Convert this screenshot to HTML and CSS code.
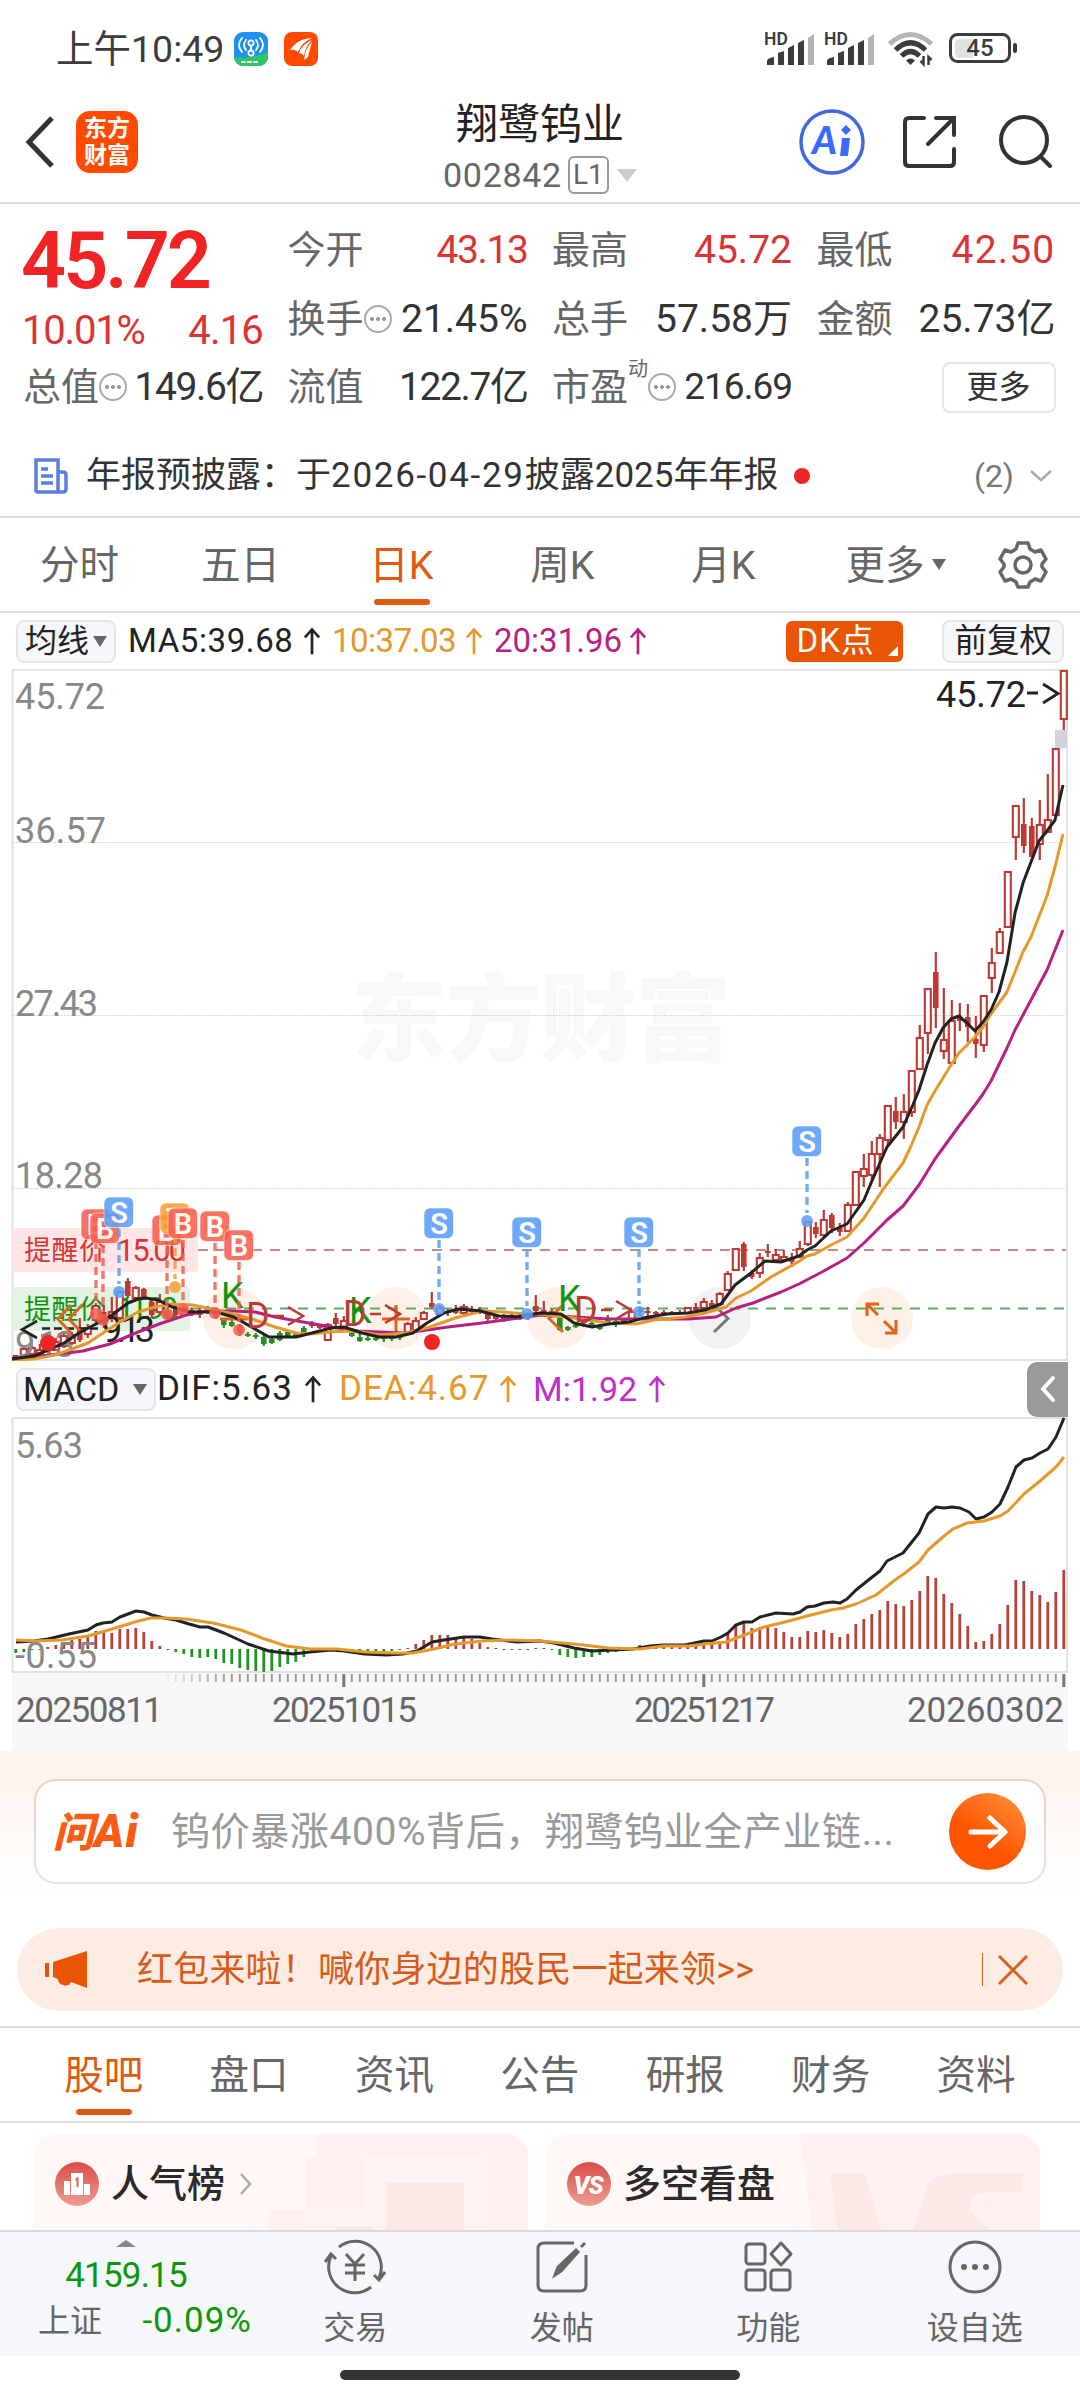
FILE: index.html
```html
<!DOCTYPE html>
<html lang="zh-CN">
<head>
    <meta charset="utf-8">
    <title>翔鹭钨业 002842</title>
    <link rel="stylesheet" href="styles.css">
</head>
<body>
    <div class="status-bar">
        <span class="clock">上午10:49</span>
        <svg class="app-icon" width="34" height="34" viewBox="0 0 34 34">
            <rect width="34" height="34" rx="9" fill="#1e90f0"/>
            <path d="M0 25 Q17 27 34 20 V25 a9 9 0 0 1-9 9 H9 a9 9 0 0 1-9-9z" fill="#2fc46a"/>
            <g fill="none" stroke="#fff" stroke-width="1.8" stroke-linecap="round">
                <path d="M8 6 Q2 13 8 20M12 8 Q8 13 12 18M26 6 Q32 13 26 20M22 8 Q26 13 22 18M17 14 V19"/>
                <circle cx="17" cy="11" r="2.6"/><circle cx="17" cy="21" r="2.6"/>
                <path d="M8 30 H26" stroke-dasharray="3 3"/>
            </g>
        </svg>
        <svg class="app-icon" width="34" height="34" viewBox="0 0 34 34">
            <rect width="34" height="34" rx="8" fill="#ff4a00"/>
            <path d="M6 18 Q14 6 28 6 Q18 10 14 20 Q11 17 6 18zM15 21 Q18 12 28 8 Q21 15 20 24 Q18 21 15 21zM20 28 Q21 16 28 10 Q25 20 24 25z" fill="#fff"/>
        </svg>
        <div class="status-right">
            <svg width="110" height="36" viewBox="765 31 110 36">
                <g id="sig">
                    <text x="764" y="45" class="hd">HD</text>
                    <path d="M767 65 v-4 q0-3 7-4 v8zM778 65 v-12 l6-2 v14zM788 65 v-17 l6-3 v20zM798 65 v-22 l6-3 v25z" fill="#3c3c3c"/>
                    <path d="M808 65 v-27 l6-4 v31z" fill="#b4b4b4"/>
                </g>
                <use href="#sig" x="60"/>
            </svg>
            <svg class="wifi" width="46" height="36" viewBox="0 0 46 36" fill="none" stroke-width="5">
                <path d="M1.500 13 Q22.500 -6 43.500 13" stroke="#b4b4b4"/>
                <path d="M7.500 19 Q22.500 4.500 37.500 19" stroke="#3c3c3c"/>
                <path d="M13.500 25 Q22.500 16 31.500 25" stroke="#3c3c3c"/>
                <path d="M22.500 34 l-4.500-4.500 q4.500-4 9 0z" fill="#3c3c3c"/>
                <path d="M35.500 25 v8 l-3-3M40.500 34 v-8 l3 3" stroke="#3c3c3c" stroke-width="2.500"/>
            </svg>
            <svg width="70" height="32" viewBox="0 0 70 32">
                <rect x="1.500" y="1.500" width="59" height="27" rx="7" fill="none" stroke="#3c3c3c" stroke-width="3"/>
                <path d="M11 6 H24 V25 H11 Q6 25 6 20 V11 Q6 6 11 6z" fill="#e2e2e2"/>
                <rect x="64" y="10" width="4" height="10" rx="2" fill="#3c3c3c"/>
                <text x="31" y="23" class="battery" text-anchor="middle">45</text>
            </svg>
        </div>
    </div>

    <div class="header">
        <div class="header-left">
            <svg width="30" height="52" viewBox="0 0 30 52" fill="none" stroke="#333" stroke-width="5"><path d="M27 2 L4 26 L27 50"/></svg>
            <div class="brand">东方<br>财富</div>
        </div>
        <div class="header-title">
            <div class="name">翔鹭钨业</div>
            <div class="code"><span class="code-no">002842</span><span class="level">L1</span><i class="tri big"></i></div>
        </div>
        <div class="header-right">
            <svg width="66" height="66" viewBox="0 0 66 66">
                <circle cx="33" cy="33" r="31" fill="none" stroke="#4069e0" stroke-width="3.500"/>
                <text x="13" y="45" class="ai">A</text>
                <path d="M43 29 h8 l-2 18 h-8z" fill="#3a6bff"/>
                <path d="M47 16 l5 5-5 5-5-5z" fill="#3a6bff"/>
            </svg>
            <svg width="54" height="54" viewBox="0 0 54 54" fill="none" stroke="#333" stroke-width="4" stroke-linecap="round">
                <path d="M21 3 H6 Q2 3 2 7 V47 Q2 51 6 51 H47 Q51 51 51 47 V34M33 3 H51 V20M51 3 L25 29"/>
            </svg>
            <svg width="54" height="54" viewBox="0 0 54 54" fill="none" stroke="#333" stroke-width="4" stroke-linecap="round">
                <circle cx="25" cy="25" r="23"/><path d="M42 42 L51 51"/>
            </svg>
        </div>
    </div>

    <div class="quote">
        <div class="quote-main">
            <div class="price">45.72</div>
            <div class="change"><span>10.01%</span><span>4.16</span></div>
            <div class="item"><label>总值<i class="more-dot"></i></label><b class="tight">149.6亿</b></div>
        </div>
        <div class="quote-col">
            <div class="item"><label>今开</label><b class="red tight">43.13</b></div>
            <div class="item"><label>换手<i class="more-dot"></i></label><b>21.45%</b></div>
            <div class="item"><label>流值</label><b class="tight">122.7亿</b></div>
        </div>
        <div class="quote-col">
            <div class="item"><label>最高</label><b class="red">45.72</b></div>
            <div class="item"><label>总手</label><b>57.58万</b></div>
            <div class="item"><label>市盈<sup>动</sup><i class="more-dot"></i></label><b class="pe">216.69</b></div>
        </div>
        <div class="quote-col">
            <div class="item"><label>最低</label><b class="red loose">42.50</b></div>
            <div class="item"><label>金额</label><b>25.73亿</b></div>
            <div class="item end"><span class="more-btn">更多</span></div>
        </div>
    </div>

    <div class="notice">
        <svg width="34" height="36" viewBox="0 0 34 36" fill="none" stroke="#5b7fe0" stroke-width="3.500">
            <path d="M2 2 H24 V34 H4 Q2 34 2 32zM24 14 H29 Q32 14 32 17 V31 Q32 34 29 34 H24M7 11 H14M7 18 H19M7 25 H19"/>
        </svg>
        <span class="notice-text">年报预披露：于<span class="date">2026-04-29</span>披露2025年年报</span>
        <i class="red-dot"></i>
        <span class="count">(2)</span>
        <svg width="22" height="12" viewBox="0 0 22 12" fill="none" stroke="#aaa" stroke-width="2.500"><path d="M1 1 L11 10 L21 1"/></svg>
    </div>

    <div class="tabs period">
        <span>分时</span><span>五日</span><span class="active">日K</span><span>周K</span><span>月K</span>
        <span class="wide">更多<i class="tri"></i></span>
        <svg width="50" height="50" viewBox="-25 -25 50 50" fill="none" stroke="#666" stroke-width="3.500" stroke-linejoin="round">
            <path d="M-5-22 H5 L7-16 L12-13 L18-15 L23-6 L19-1 V2 L23 7 L18 16 L12 14 L7 17 L5 22 H-5 L-7 17 L-12 14 L-18 16 L-23 7 L-19 2 V-1 L-23-6 L-18-15 L-12-13 L-7-16z"/>
            <circle r="8"/>
        </svg>
    </div>

    <div class="indicator-row ma-row">
        <span class="chip">均线<i class="tri"></i></span>
        <span class="ind ma5">MA5:39.68<svg class="up" viewBox="0 0 18 30"><path d="M9 30 V2M1 11 L9 2 L17 11"/></svg></span>
        <span class="ind ma10">10:37.03<svg class="up" viewBox="0 0 18 30"><path d="M9 30 V2M1 11 L9 2 L17 11"/></svg></span>
        <span class="ind ma20">20:31.96<svg class="up" viewBox="0 0 18 30"><path d="M9 30 V2M1 11 L9 2 L17 11"/></svg></span>
        <span class="dk">DK点</span>
        <span class="chip right">前复权</span>
    </div>

    <svg class="chart" id="kline" width="1080" height="692" viewBox="0 669 1080 692"></svg>

    <div class="indicator-row macd-row">
        <span class="chip">MACD<i class="tri"></i></span>
        <span class="ind dif">DIF:5.63<svg class="up" viewBox="0 0 18 30"><path d="M9 30 V2M1 11 L9 2 L17 11"/></svg></span>
        <span class="ind dea">DEA:4.67<svg class="up" viewBox="0 0 18 30"><path d="M9 30 V2M1 11 L9 2 L17 11"/></svg></span>
        <span class="ind m">M:1.92<svg class="up" viewBox="0 0 18 30"><path d="M9 30 V2M1 11 L9 2 L17 11"/></svg></span>
        <span class="fold"><svg width="16" height="28" viewBox="0 0 16 28" fill="none" stroke="#fff" stroke-width="4" stroke-linecap="round"><path d="M13 3 L3 14 L13 25"/></svg></span>
    </div>

    <svg class="chart" id="macd" width="1080" height="334" viewBox="0 1417 1080 334"></svg>

    <div class="ask">
        <div class="ask-box">
            <span class="ask-logo">问<span>Ai</span></span>
            <span class="ask-text">钨价暴涨400%背后，翔鹭钨业全产业链...</span>
            <span class="ask-go"><svg width="40" height="36" viewBox="0 0 40 36" fill="none" stroke="#fff" stroke-width="5" stroke-linecap="round" stroke-linejoin="round"><path d="M3 18 H36M22 4 L37 18 L22 32"/></svg></span>
        </div>
    </div>

    <div class="banner">
        <svg width="44" height="38" viewBox="0 0 44 38" fill="#ea5504"><path d="M1 12 h4 v14 h-4zM9 11 L43 0 V37 L27 31 Q25 36 19 34 Q14 33 14 28 L9 26z"/></svg>
        <span class="banner-text">红包来啦！喊你身边的股民一起来领&gt;&gt;</span>
        <i class="bar"></i>
        <svg width="30" height="30" viewBox="0 0 30 30" stroke="#d9601f" stroke-width="3"><path d="M1 1 L29 29M29 1 L1 29"/></svg>
    </div>

    <div class="tabs section">
        <span class="active">股吧</span><span>盘口</span><span>资讯</span><span>公告</span><span>研报</span><span>财务</span><span>资料</span>
    </div>

    <div class="cards">
        <div class="card">
            <svg class="deco" width="260" height="98" viewBox="0 0 260 98">
                <path d="M48 0 H260 V98 H0 V76 H38 V22 H48z" fill="#fef1ef"/>
                <path d="M35 76 H96 V22 H218 V98 H35z" fill="#fff4f2"/>
                <path d="M118 49 H196 V98 H118zM68 93 H104 V98 H68z" fill="#fce8e6"/>
            </svg>
            <svg width="44" height="44" viewBox="0 0 44 44">
                <circle cx="22" cy="22" r="22" fill="url(#redgrad)"/>
                <path d="M9 19 h6 v14 h-6zM16 11 h12 v22 h-12zM29 22 h6 v11 h-6z" fill="#fff"/>
                <path d="M20.500 18 L22.500 16.500 V25" fill="none" stroke="#dd6058" stroke-width="2"/>
                <defs><linearGradient id="redgrad" x2="0" y2="1"><stop stop-color="#d94c48"/><stop offset="1" stop-color="#ee9c94"/></linearGradient></defs>
            </svg>
            <span>人气榜</span>
            <svg width="12" height="24" viewBox="0 0 12 24" fill="none" stroke="#aaa" stroke-width="2.500"><path d="M1 2 L10 12 L1 22"/></svg>
        </div>
        <div class="card">
            <svg class="deco" width="240" height="98" viewBox="0 0 240 98">
                <path d="M0 0 H240 V98 H12z" fill="#fef1ef"/>
                <path d="M30 39 H65 L82 98 H38zM112 98 L128 50 Q136 39 160 39 H224 L222 58 H188 Q170 58 170 76 L190 98z" fill="#fce8e6"/>
            </svg>
            <svg width="44" height="44" viewBox="0 0 44 44">
                <circle cx="22" cy="22" r="22" fill="url(#redgrad)"/>
                <text x="21" y="32" class="vs" text-anchor="middle">VS</text>
            </svg>
            <span>多空看盘</span>
        </div>
    </div>

    <div class="bottom-bar">
        <div class="index">
            <i class="tri up-tri"></i>
            <div class="idx-val">4159.15</div>
            <div class="idx-row"><span>上证</span><span class="green">-0.09%</span></div>
        </div>
        <div class="nav">
            <svg width="62" height="56" viewBox="-31 -28 62 56" fill="none" stroke="#666" stroke-width="3">
                <path d="M-16-20 A26 26 0 0 1 24 11 M30 5 L24 13 L19 8M16 20 A26 26 0 0 1-24-11 M-30-5 L-24-13 L-19-8"/>
                <path d="M-9-13 L0-3 L9-13M0-3 V14M-10-2 H10M-10 6 H10"/>
            </svg>
            <span>交易</span>
        </div>
        <div class="nav">
            <svg width="54" height="54" viewBox="-27 -27 54 54" fill="none" stroke="#666" stroke-width="3">
                <path d="M12-24 H-18 Q-24-24-24-18 V18 Q-24 24-18 24 H18 Q24 24 24 18 V-12"/>
                <path d="M-7 8 L-4 0 L14-17 L16-15 L-1 4zM19-20 L23-24" fill="#666"/>
            </svg>
            <span>发帖</span>
        </div>
        <div class="nav">
            <svg width="52" height="54" viewBox="-26 -27 52 54" fill="none" stroke="#666" stroke-width="3" stroke-linejoin="round">
                <rect x="-22" y="-23" width="19" height="20" rx="3"/><rect x="-22" y="3" width="19" height="20" rx="3"/><rect x="3" y="3" width="19" height="20" rx="3"/>
                <path d="M13-24 L23-13 L13-2 L3-13z"/>
            </svg>
            <span>功能</span>
        </div>
        <div class="nav">
            <svg width="54" height="54" viewBox="-27 -27 54 54">
                <circle r="25" fill="none" stroke="#666" stroke-width="3"/>
                <g fill="#666"><circle cx="-11" r="3"/><circle r="3"/><circle cx="11" r="3"/></g>
            </svg>
            <span>设自选</span>
        </div>
    </div>
    <div class="home-indicator"></div>

    <script src="chart.js"></script>
</body>
</html>
```

FILE: styles.css
```css
* {
    box-sizing: border-box;
}
body {
    margin: 0;
    width: 1080px;
    height: 2400px;
    overflow: hidden;
    background: #fff;
    color: #333;
    font-family: Roboto, "Noto Sans CJK SC", sans-serif;
}
svg {
    display: block;
    flex: none;
}
i {
    display: inline-block;
    flex: none;
}
.tri {
    border: 7px solid transparent;
    border-top: 11px solid #666;
    border-bottom: 0;
}
.tri.big {
    border-width: 13px 10px 0;
    border-top-color: #ccc;
    margin-left: 8px;
}

/* status bar */
.status-bar {
    display: flex;
    align-items: center;
    height: 98px;
    padding-left: 56px;
}
.clock {
    width: 178px;
    font-size: 37.5px;
    line-height: 50px;
    color: #3c3c3c;
    white-space: nowrap;
}
.app-icon {
    margin-right: 16px;
}
.status-right {
    display: flex;
    align-items: center;
    margin-left: auto;
    padding-right: 61px;
}
.hd {
    font: 600 17.5px Roboto, sans-serif;
    fill: #3c3c3c;
}
.wifi {
    margin: 0 15px 0 13px;
}
.battery {
    font: 500 24px Roboto, sans-serif;
    fill: #3c3c3c;
}

/* header */
.header {
    display: grid;
    grid-template-columns: 1fr 240px 1fr;
    align-items: center;
    height: 106px;
    border-bottom: 2px solid #dcdcdc;
}
.header-left {
    display: flex;
    align-items: center;
    gap: 21px;
    padding: 0 0 16px 25px;
}
.brand {
    width: 62px;
    height: 62px;
    padding-top: 4px;
    border-radius: 14px;
    background: #ff4a00;
    color: #fff;
    font-size: 23px;
    font-weight: 700;
    line-height: 27px;
    text-align: center;
}
.header-title {
    text-align: center;
}
.name {
    font-size: 42px;
    line-height: 50px;
    color: #222;
}
.code {
    display: flex;
    align-items: center;
    height: 50px;
    padding-left: 23px;
    font-size: 34px;
    color: #666;
}
.code-no {
    width: 119px;
    letter-spacing: 0.7px;
}
.level {
    margin-left: 6px;
    padding: 0 3px;
    border: 2px solid #999;
    border-radius: 6px;
    font-size: 28px;
    line-height: 34px;
}
.header-right {
    display: flex;
    align-items: center;
    justify-content: flex-end;
    padding: 0 27px 16px 0;
}
.header-right svg:nth-child(2) {
    margin: 0 42px 0 38px;
}
.ai {
    font: italic 900 38px Lato, sans-serif;
    fill: #3a6bff;
}

/* quote */
.quote {
    display: grid;
    grid-template-columns: 240px 240px 240px 239px;
    column-gap: 24.5px;
    height: 218px;
    padding: 12px 0 0 23px;
}
.item {
    display: flex;
    align-items: center;
    justify-content: space-between;
    height: 68.5px;
    font-size: 38px;
    line-height: 68px;
    white-space: nowrap;
}
.item label {
    display: flex;
    align-items: center;
    color: #666;
}
.item b {
    font-weight: 400;
    font-size: 39px;
}
.item .tight {
    letter-spacing: -1.4px;
}
.item .loose {
    letter-spacing: 1.2px;
}
.item.end {
    justify-content: flex-end;
}
.item sup {
    align-self: flex-start;
    width: 20px;
    font-size: 20px;
    line-height: 32px;
}
.item .pe {
    font-size: 37px;
    letter-spacing: -1px;
}
.item .red,
.change {
    color: #d93535;
}
.more-dot {
    width: 28px;
    height: 28px;
    border: 2px solid #aaa;
    border-radius: 50%;
    background: radial-gradient(circle, #999 1.8px, transparent 2.2px) center / 6px 6px no-repeat,
        radial-gradient(circle, #999 1.8px, transparent 2.2px) 3px 9px / 6px 6px no-repeat,
        radial-gradient(circle, #999 1.8px, transparent 2.2px) 15px 9px / 6px 6px no-repeat;
}
.price {
    height: 88px;
    margin-left: -2px;
    color: #f02424;
    font-size: 79px;
    font-weight: 600;
    line-height: 90px;
    letter-spacing: -3px;
}
.change {
    display: flex;
    justify-content: space-between;
    height: 49px;
    font-size: 40px;
    line-height: 54px;
    letter-spacing: -0.8px;
}
.change span:first-child {
    margin-left: -1px;
    letter-spacing: -1.2px;
}
.more-btn {
    width: 114px;
    height: 51px;
    border: 2px solid #e6e6e6;
    border-radius: 8px;
    font-size: 32px;
    line-height: 46px;
    text-align: center;
}
.notice {
    display: flex;
    align-items: center;
    height: 96px;
    padding: 14px 28px 0 34px;
    border-bottom: 2px solid #dcdcdc;
    font-size: 35px;
    line-height: 48px;
}
.notice-text {
    margin-left: 18px;
    white-space: nowrap;
}
.date {
    letter-spacing: 1.7px;
}
.red-dot {
    width: 16px;
    height: 16px;
    margin-left: 16px;
    border-radius: 50%;
    background: #f02424;
}
.count {
    margin: 0 16px 0 auto;
    color: #777;
    font-size: 32px;
}

/* tabs */
.tabs {
    display: flex;
    align-items: center;
    height: 95px;
    border-bottom: 2px solid #dcdcdc;
    color: #666;
    font-size: 39.5px;
    line-height: 96px;
}
.tabs span {
    position: relative;
    flex: none;
    width: 161px;
    height: 93px;
    text-align: center;
}
.period {
    padding-right: 32px;
}
.period span {
    left: -1px;
}
.tabs .active {
    color: #dd5a10;
}
.tabs .active::after {
    content: "";
    position: absolute;
    left: 50%;
    bottom: 6px;
    width: 56px;
    height: 6px;
    margin-left: -28px;
    border-radius: 3px;
    background: #dd5a10;
}
.tabs .tri {
    margin: 0 0 9px 7px;
}
.period .wide {
    width: 193px;
    padding-right: 10px;
}
.section {
    padding-left: 31px;
    border-top: 2px solid #dcdcdc;
    height: 97px;
}
.section span {
    width: 145.4px;
}

/* indicator rows */
.indicator-row {
    display: flex;
    align-items: center;
    height: 56px;
    padding: 0 16px;
    font-size: 33px;
    line-height: 40px;
}
.chip {
    display: flex;
    flex: none;
    align-items: center;
    height: 43px;
    padding: 0 7px 0 7px;
    border: 2px solid #e3e5ea;
    border-radius: 8px;
    background: #f6f7fa;
    color: #222;
    font-size: 32px;
    white-space: nowrap;
}
.chip .tri {
    margin-left: 4px;
}
.chip.right {
    margin-left: 39px;
    padding: 0 10px;
    font-size: 32.5px;
}
.ind {
    display: flex;
    flex: none;
    align-items: center;
    justify-content: space-between;
    margin-left: 12px;
    white-space: nowrap;
}
.up {
    width: 16px;
    height: 30px;
    fill: none;
    stroke: currentColor;
    stroke-width: 3;
}
.ma5 {
    width: 192px;
    color: #222;
    letter-spacing: 0.6px;
}
.ma10 {
    width: 150px;
    color: #e6982c;
    letter-spacing: -0.5px;
}
.ma20 {
    width: 152px;
    color: #b8207f;
}
.dk {
    position: relative;
    width: 117px;
    height: 41px;
    margin-left: auto;
    padding-left: 10px;
    border-radius: 6px;
    background: #ea5504;
    color: #fff;
    font-size: 33px;
    line-height: 40px;
    letter-spacing: 1px;
}
.dk::after {
    content: "";
    position: absolute;
    right: 5px;
    bottom: 6px;
    border: 5px solid transparent;
    border-right-color: #fff;
    border-bottom-color: #fff;
}
.macd-row {
    padding: 0 12px 0 16px;
}
.macd-row .chip {
    width: 140px;
    justify-content: space-between;
    padding: 0 7px 0 5px;
    font-size: 34px;
}
.dif {
    width: 164px;
    margin-left: 1px;
    font-size: 35px;
    color: #222;
    letter-spacing: 0.9px;
}
.dea {
    width: 177px;
    margin-left: 18px;
    font-size: 35px;
    color: #e6982c;
    letter-spacing: 1px;
}
.m {
    width: 132px;
    margin-left: 17px;
    font-size: 34px;
    color: #c02ecb;
}
.fold {
    display: flex;
    align-items: center;
    justify-content: center;
    width: 41px;
    height: 55px;
    margin-left: auto;
    border-radius: 10px 0 0 10px;
    background: #999;
}

/* charts */
.chart text {
    font-size: 36px;
}
.chart .axis {
    fill: #888;
}
.chart .date-label {
    fill: #666;
    font-size: 35px;
}
.chart .mark {
    fill: #222;
}
.chart .alert {
    font-size: 27px;
}
.chart .alert-num {
    font-size: 31px;
}
.chart .tag {
    fill: #fff;
    font-size: 29px;
    font-weight: 600;
    text-anchor: middle;
}
.chart .k {
    fill: #0c960c;
}
.chart .d {
    fill: #bd3934;
}
.chart .watermark {
    fill: #f8f8f8;
    font-size: 96px;
    font-weight: 900;
}

/* ask box */
.ask {
    height: 177px;
    padding: 28px 34px 0;
    background: linear-gradient(#fff2ec, #fff 150px);
}
.ask-box {
    display: flex;
    align-items: center;
    height: 105px;
    padding: 0 18px 0 17px;
    border: 2px solid transparent;
    border-radius: 22px;
    background: linear-gradient(#fff, #fff) padding-box, linear-gradient(#ecd0c8, #dde5f0) border-box;
}
.ask-logo {
    width: 118px;
    color: #f95d14;
    font-size: 41px;
    font-style: italic;
    font-weight: 900;
    line-height: 50px;
    white-space: nowrap;
}
.ask-logo span {
    font-size: 46px;
    letter-spacing: 1px;
}
.ask-text {
    color: #999;
    font-size: 39px;
    line-height: 50px;
    letter-spacing: 0.6px;
    white-space: nowrap;
}
.ask-go {
    display: flex;
    align-items: center;
    justify-content: center;
    width: 77px;
    height: 77px;
    margin-left: auto;
    border-radius: 50%;
    background: linear-gradient(215deg, #ff9440, #ff5500 60%);
}
.banner {
    display: flex;
    align-items: center;
    height: 83px;
    margin: 0 17px 15px;
    padding: 0 35px 0 27px;
    border-radius: 42px;
    background: #fcece3;
}
.banner-text {
    margin-left: 49px;
    color: #d95b1a;
    font-size: 36px;
    line-height: 50px;
    letter-spacing: 0.2px;
    white-space: nowrap;
}
.bar {
    width: 1px;
    height: 33px;
    margin: 0 15px 0 auto;
    background: #d9601f;
}

/* cards */
.cards {
    display: flex;
    gap: 17px;
    height: 107px;
    padding: 11px 33px 0;
    overflow: hidden;
}
.card {
    position: relative;
    display: flex;
    align-items: center;
    width: 495px;
    height: 120px;
    padding: 0 0 20px 22px;
    border-radius: 22px;
    background: #fff8f6;
    overflow: hidden;
    color: #2a2a2a;
    font-size: 38px;
    font-weight: 500;
    line-height: 50px;
}
.card span {
    position: relative;
    margin: 0 15px 0 12px;
}
.card svg {
    position: relative;
}
.card .deco {
    position: absolute;
    top: 0;
    right: 0;
}
.vs {
    font: italic 900 25px Roboto, sans-serif;
    letter-spacing: -1px;
    fill: #fff;
}

/* bottom bar */
.bottom-bar {
    display: flex;
    height: 126px;
    border-top: 2px solid #d8dadd;
    background: #f6f7fa;
    color: #666;
    font-size: 32px;
    line-height: 40px;
}
.index {
    width: 252px;
    text-align: center;
    color: #0c960c;
}
.index .up-tri {
    display: block;
    width: 20px;
    margin: 8px auto 0;
    border-width: 0 10px 7px;
    border-bottom: 7px solid #888;
}
.idx-val {
    height: 56px;
    padding-top: 9px;
    font-size: 35px;
    letter-spacing: -0.8px;
}
.idx-row {
    display: flex;
    justify-content: space-between;
    padding-left: 38px;
    line-height: 36px;
}
.idx-row span:first-child {
    color: #666;
}
.idx-row .green {
    font-size: 35px;
    letter-spacing: 1px;
}
.nav {
    display: flex;
    flex-direction: column;
    align-items: center;
    width: 206.5px;
}
.nav svg {
    height: 70px;
}
.nav span {
    margin-top: 6px;
}
.home-indicator {
    width: 400px;
    height: 10px;
    margin: 14px auto 0;
    border-radius: 5px;
    background: #333;
}
```

FILE: chart.js
```js
const RED = '#bd3934';
const GREEN = '#1f9320';
const X0 = 15.8;
const STEP = 8;

// index, high, body top, body bottom, low, kind (u hollow, r solid red, g green)
const candles = [
    [0,1355,1355,1359,1359,'r'],[1,1347,1349,1355,1357,'u'],[2,1345,1348,1354,1356,'u'],[3,1344,1350,1354,1355,'u'],
    [4,1340,1344,1352,1353,'r'],[5,1338,1342,1350,1351,'u'],[6,1332,1336,1346,1348,'u'],[7,1332,1335,1343,1345,'u'],
    [8,1318,1330,1340,1342,'r'],[9,1324,1328,1334,1338,'u'],[10,1303,1306,1320,1324,'u'],[11,1306,1312,1324,1328,'r'],
    [12,1297,1312,1318,1322,'u'],[13,1291,1292,1318,1320,'u'],[14,1278,1281,1296,1298,'r'],[15,1286,1288,1298,1300,'u'],
    [16,1288,1289,1298,1299,'r'],[17,1300,1302,1315,1318,'r'],[18,1294,1302,1312,1314,'u'],[19,1307,1311,1319,1321,'r'],
    [20,1304,1308,1315,1317,'r'],[21,1305,1308,1314,1316,'u'],[22,1308,1310,1314,1316,'r'],[23,1308,1310,1315,1318,'r'],
    [24,1306,1309,1312,1314,'r'],[25,1308,1310,1317,1319,'r'],[26,1318,1320,1325,1328,'g'],[27,1320,1322,1326,1327,'g'],
    [28,1324,1326,1333,1336,'r'],[29,1332,1334,1336,1337,'g'],[30,1333,1335,1337,1339,'g'],[31,1334,1337,1344,1346,'g'],
    [32,1338,1339,1343,1344,'g'],[33,1331,1333,1340,1341,'g'],[34,1330,1332,1336,1338,'g'],[35,1333,1334,1337,1338,'g'],
    [36,1326,1328,1332,1333,'g'],[37,1321,1322,1326,1328,'r'],[38,1324,1325,1328,1329,'r'],[39,1323,1325,1340,1341,'u'],
    [40,1313,1318,1324,1326,'r'],[41,1316,1321,1330,1332,'u'],[42,1331,1333,1336,1337,'g'],[43,1332,1337,1341,1342,'g'],
    [44,1336,1338,1340,1341,'g'],[45,1336,1338,1340,1341,'g'],[46,1335,1337,1339,1342,'g'],[47,1335,1337,1339,1341,'g'],
    [48,1333,1335,1338,1340,'g'],[49,1322,1324,1332,1333,'u'],[50,1317,1321,1330,1331,'u'],[51,1311,1313,1319,1320,'u'],
    [52,1292,1303,1307,1309,'r'],[53,1305,1308,1314,1316,'u'],[54,1309,1311,1313,1316,'r'],[55,1305,1309,1313,1314,'r'],
    [56,1304,1307,1313,1315,'u'],[57,1306,1309,1312,1314,'r'],[58,1307,1309,1312,1314,'r'],[59,1311,1314,1319,1321,'r'],
    [60,1314,1316,1319,1320,'r'],[61,1314,1317,1319,1322,'r'],[62,1312,1315,1318,1320,'r'],[63,1314,1316,1318,1320,'r'],
    [64,1312,1314,1317,1320,'r'],[65,1295,1306,1311,1313,'r'],[66,1301,1310,1313,1315,'r'],[67,1309,1311,1313,1315,'r'],
    [68,1316,1318,1330,1331,'g'],[69,1326,1327,1330,1331,'g'],[70,1322,1325,1327,1328,'g'],[71,1316,1320,1323,1327,'r'],
    [72,1321,1323,1326,1328,'g'],[73,1324,1325,1329,1330,'g'],[74,1315,1318,1322,1325,'g'],[75,1318,1321,1323,1327,'g'],
    [76,1318,1320,1322,1324,'r'],[77,1311,1312,1319,1323,'u'],[78,1307,1310,1312,1316,'r'],[79,1307,1311,1313,1316,'r'],
    [80,1311,1312,1314,1316,'r'],[81,1310,1312,1314,1315,'r'],[82,1311,1312,1314,1315,'r'],[83,1310,1312,1314,1315,'r'],
    [84,1307,1308,1313,1314,'u'],[85,1303,1307,1310,1312,'r'],[86,1298,1302,1308,1309,'u'],[87,1300,1303,1307,1308,'r'],
    [88,1292,1294,1304,1306,'u'],[89,1271,1274,1290,1291,'u'],[90,1248,1249,1270,1271,'u'],[91,1242,1244,1267,1271,'r'],
    [92,1270,1273,1277,1279,'r'],[93,1253,1258,1273,1278,'u'],[94,1244,1251,1253,1257,'r'],[95,1249,1255,1260,1262,'u'],
    [96,1250,1257,1260,1261,'u'],[97,1253,1258,1262,1267,'r'],[98,1241,1249,1257,1258,'u'],[99,1221,1222,1244,1246,'u'],
    [100,1222,1227,1234,1238,'r'],[101,1210,1220,1235,1237,'u'],[102,1213,1215,1228,1233,'r'],[103,1223,1228,1232,1236,'r'],
    [104,1202,1205,1231,1232,'u'],[105,1171,1172,1205,1206,'u'],[106,1154,1169,1176,1187,'u'],[107,1141,1154,1175,1180,'u'],
    [108,1134,1138,1154,1187,'u'],[109,1105,1106,1140,1147,'u'],[110,1097,1111,1122,1129,'r'],[111,1094,1112,1122,1139,'u'],
    [112,1070,1071,1112,1117,'u'],[113,1025,1038,1069,1069,'u'],[114,988,989,1033,1054,'u'],[115,952,972,1008,1028,'r'],
    [116,988,1040,1051,1059,'u'],[117,1000,1021,1063,1063,'u'],[118,1003,1018,1021,1031,'r'],[119,1004,1017,1027,1042,'r'],
    [120,1016,1039,1044,1058,'r'],[121,996,996,1045,1052,'u'],[122,948,963,978,993,'u'],[123,928,932,953,953,'u'],
    [124,872,872,927,927,'u'],[125,806,806,837,860,'u'],[126,798,824,846,853,'r'],[127,818,826,857,857,'r'],
    [128,800,825,844,860,'u'],[129,774,820,832,832,'u'],[130,748,749,815,815,'u'],[131,671,671,719,730,'u']
];

const ma5 = '12,1359 34,1356 48,1350 64,1343 79,1333 96,1324 112,1315 128,1303 138,1299 146,1298 158,1300 172,1307 189,1311.7 215,1312 234,1317 248,1325 269,1337 296,1337 312,1333 331,1328 344,1327 362,1333 379,1337 396,1337 413,1333 427,1323 444,1313 458,1309 479,1310.7 499,1316 517,1316.7 540,1313 561,1314 574,1323 592,1327 609,1324 629,1322 643,1318 667,1314 688,1313 705,1310 721,1304 735,1285 751,1273 765,1261 781,1262 799,1256 807,1250 815,1246 831,1231 847,1224 864,1200 871,1183 887,1147 903,1127 912,1107 919,1090 927,1065 935,1043 943,1028 951,1019 959,1016 967,1023 975,1031 983,1022 991,1010 999,992 1007,962 1015,913 1023,883 1031,862 1039,841 1047,831 1055,820 1063,785';
const ma10 = '12,1360 34,1359 55,1355 69,1350 88,1343 103,1333 120,1322 138,1312 155,1307 172,1304 193,1305 215,1310 234,1314 255,1320 275,1327 296,1333 310,1334 331,1332 344,1331 362,1332 379,1335 406,1333 430,1327 455,1318 482,1311 503,1312 527,1314 540,1314 574,1318 609,1323 636,1324 654,1320 685,1317 705,1313 726,1307 736,1298 751,1291 771,1277 798,1262 807,1256 815,1254 831,1245 847,1237 864,1218 884,1188 903,1163 911,1146 919,1127 927,1105 935,1091 943,1078 951,1065 959,1053 975,1037 983,1027 991,1014 999,1003 1007,992 1015,972 1023,952 1031,937 1047,896 1055,867 1063,834';
const ma20 = '12,1358 34,1357 58,1354 83,1351 110,1344 138,1332 162,1323 186,1315 207,1311 234,1311 255,1312 275,1317 303,1322 331,1327 358,1331 379,1332 403,1333 427,1330 448,1327 482,1323 527,1317 540,1315 574,1317 609,1319 643,1319 688,1319 716,1317 736,1308 753,1303 781,1292 799,1284 822,1272 847,1258 864,1243 887,1220 903,1206 919,1185 935,1159 959,1126 975,1105 983,1094 991,1081 1007,1048 1015,1030 1031,1000 1047,970 1063,930';

const dif = '16,1642 34,1641 48,1639 69,1634 88,1630 96,1625 103,1623 112,1622 120,1617 128,1614 136,1611 144,1612 152,1615 164,1618 176,1620 189,1624 200,1627 208,1627 224,1633 248,1644 269,1651 293,1654 310,1652 331,1650 344,1651 365,1654 386,1655 403,1654 417,1651 432,1642 444,1640 464,1637 480,1637 492,1639 517,1642 540,1641 554,1643 574,1648 592,1651 633,1649 650,1646 664,1645 685,1645 704,1641 712,1641 721,1637 728,1633 736,1625 744,1622 752,1622 760,1617 776,1613 793,1614 800,1612 807,1607 815,1606 824,1603 833,1602 840,1603 847,1599 856,1590 871,1578 880,1571 887,1561 903,1553 919,1533 928,1514 936,1507 944,1508 952,1507 960,1508 969,1512 976,1519 984,1517 992,1512 1000,1504 1008,1487 1016,1467 1024,1460 1032,1458 1040,1453 1048,1449 1056,1437 1064,1418';
const dea = '16,1640 34,1641 62,1640 88,1636 112,1629 138,1621 151,1618 165,1618 186,1619 213,1623 241,1630 262,1638 286,1646 310,1649 337,1649 365,1652 393,1653 413,1653 434,1649 455,1644 482,1641 510,1640 540,1641 574,1644 609,1648 640,1649 664,1646 688,1646 705,1644 726,1642 747,1634 764,1627 781,1623 800,1618 807,1616 831,1610 843,1608 856,1604 876,1595 895,1580 905,1573 919,1562 928,1550 944,1536 953,1529 967,1523 984,1521 1000,1516 1008,1511 1024,1494 1040,1481 1056,1467 1064,1457';

// histogram heights in px, positive above zero
const bars = [-4,-3,-1,-1,2,4,7,9,10,12,18,18,16,20,20,21,17,8,3,-1,-3,-5,-8,-9,-8,-10,-14,-15,-19,-21,-22,-23,-22,-18,-15,-13,-8,-4,-3,-2,-1,-1,-2,-4,-3,-4,-3,-2,-1,1,5,9,14,14,14,11,11,10,6,2,1,-1,-1,-1,-1,1,1,-1,-6,-8,-9,-8,-8,-6,-4,-3,-2,1,4,4,4,4,4,4,4,5,6,6,8,16,25,26,21,22,22,21,17,12,12,18,17,19,16,12,15,25,30,35,39,48,45,43,49,58,73,71,55,46,35,23,7,8,15,25,44,69,68,58,54,47,57,79];

const xOf = i => X0 + STEP * i;
const line = (pts, color) => `<polyline points="${pts}" fill="none" stroke="${color}" stroke-width="3" stroke-linejoin="round"/>`;

function drawKline() {
    let s = '<path d="M12 669.700 H1068M12 1360 H1068M12.500 669 V1360M1067 669 V1360" stroke="#e2e2e2" stroke-width="2"/>';
    s += '<text class="watermark" x="351" y="1053" textLength="380">东方财富</text>';
    s += '<path d="M13 842.500 H1066M13 1015.500 H1066M13 1188.500 H1066" stroke="#ccc" stroke-dasharray="1.500 1.500"/>';

    // floating buttons
    for (const x of [73, 234, 396, 558, 882]) s += `<circle cx="${x}" cy="1318" r="31" fill="#fff0e8"/>`;
    s += '<circle cx="720" cy="1318" r="31" fill="#f2f2f2"/>';
    s += '<rect x="12" y="1228" width="186" height="44" fill="#ffe5e5" rx="4"/><rect x="12" y="1287" width="178" height="44" fill="#dff2e1" fill-opacity=".9" rx="4"/>';
    s += '<path d="M198 1250 H1066" stroke="#cf8583" stroke-width="1.800" stroke-dasharray="10 8"/><path d="M190 1308.500 H1066" stroke="#5cae5c" stroke-width="1.800" stroke-dasharray="10 8"/>';
    s += '<text class="alert" x="24" y="1260" fill="#d93535" textLength="82">提醒价</text><text x="117" y="1261" class="alert alert-num" fill="#d93535" textLength="69">15.00</text>';
    s += '<text class="alert" x="24" y="1319" fill="#0c960c" textLength="82">提醒价</text><text x="117" y="1319" class="alert alert-num" fill="#0c960c" textLength="61">11.90</text>';

    for (const [i, hi, top, bot, lo, kind] of candles) {
        const x = xOf(i);
        const c = kind === 'g' ? GREEN : RED;
        if (kind === 'u') {
            s += `<path d="M${x} ${hi} V${top}M${x} ${bot} V${lo}" stroke="${c}" stroke-width="2.200"/>`;
            s += `<rect x="${x - 3}" y="${top}" width="6" height="${Math.max(bot - top, 1)}" fill="#fff" stroke="${c}" stroke-width="2.100"/>`;
        } else {
            s += `<path d="M${x} ${hi} V${lo}" stroke="${c}" stroke-width="2.200"/>`;
            s += `<rect x="${x - 2.800}" y="${top}" width="5.600" height="${bot - top}" fill="${c}"/>`;
        }
    }
    s += '<rect x="1055" y="730" width="12" height="18" fill="#d0d3d9"/>';

    s += '<text class="axis" x="15" y="709" textLength="90">45.72</text><text class="axis" x="15" y="843" textLength="91">36.57</text><text class="axis" x="15" y="1016" textLength="83">27.43</text><text class="axis" x="15" y="1188" textLength="88">18.28</text><text class="axis" x="15" y="1357" textLength="60">9.13</text>';
    s += '<text class="mark" x="102" y="1342" textLength="53">9.13</text><path d="M37 1321 L22 1329.500 L37 1338" fill="none" stroke="#222" stroke-width="2.600"/><path d="M42 1328.500 H100" stroke="#222" stroke-width="2.600" stroke-dasharray="8 4"/>';
    s += '<text class="mark" x="936" y="707" textLength="90">45.72</text><path d="M1027 693 H1038M1043 684 L1058 693.500 L1043 703" fill="none" stroke="#222" stroke-width="2.800"/>';

    s += '<g fill="none" stroke="#e0641c" stroke-width="3"><path d="M71 1305 L58 1319 L71 1333M82 1305 L69 1319 L82 1333M220 1319 H248M382 1319 H410M396 1305 V1333M563 1305 L549 1318.500 L563 1332M867 1316 V1304 H879M867 1304 L878 1315M885 1333 H896V1320M884 1321 L896 1333"/></g>';
    s += '<path d="M714 1305 L728 1318.500 L714 1332" fill="none" stroke="#777" stroke-width="3"/>';

    s += line(ma20, '#b8207f') + line(ma10, '#e6982c') + line(ma5, '#222');
    s += '<circle cx="48" cy="1343" r="8" fill="#f02424"/><circle cx="432" cy="1342" r="8" fill="#f02424"/>';

    for (const [x, y] of [[221, 1308], [349, 1323], [558, 1311]]) s += `<text class="k" x="${x}" y="${y}">K</text>`;
    for (const [x, y] of [[246, 1328], [343, 1326], [574, 1322]]) {
        s += `<text class="d" x="${x}" y="${y}">D</text><path d="M${x + 27} ${y - 12} h11M${x + 42} ${y - 21} l15 9 l-15 9" fill="none" stroke="${RED}" stroke-width="2.600"/>`;
    }

    // trade marks: letter, tag left, tag top, dot x, dot y, colours
    const R = '#f8604e', B = '#5a9ef8', O = '#f6a030';
    const tags = [
        ['B', 81, 1209, 96, 1314, R], ['B', 90, 1213, 103, 1320, R], ['S', 104, 1197, 119, 1292, B],
        ['B', 152, 1215, 167, 1314, R], ['T', 160, 1203, 175, 1287, O], ['B', 168, 1208, 183, 1309, R],
        ['B', 200, 1211, 215, 1313, R], ['B', 224, 1230, 239, 1330, R],
        ['S', 424, 1208, 439, 1309, B], ['S', 512, 1217, 527, 1314, B], ['S', 624, 1217, 639, 1312, B], ['S', 792, 1126, 807, 1221, B]
    ];
    for (const [t, x, y, dx, dy, c] of tags) {
        s += `<path d="M${dx} ${y + 32} V${dy - 8}" stroke="${c}" stroke-width="3.400" stroke-dasharray="8 5" opacity=".85"/>`;
        s += `<circle cx="${dx}" cy="${dy}" r="6" fill="${c}" opacity=".85"/>`;
        s += `<g opacity=".88"><rect x="${x}" y="${y}" width="29.500" height="30.500" rx="6" fill="${c}" stroke="#fff" stroke-opacity=".6"/><text class="tag" x="${x + 15}" y="${y + 25.500}">${t}</text></g>`;
    }
    document.getElementById('kline').innerHTML = s;
}

function drawMacd() {
    let s = '<rect x="12" y="1672" width="1056" height="79" fill="#f7f7fa"/>';
    s += '<path d="M12 1418 H1068M12 1672 H1068M12.500 1418 V1672M1067 1418 V1672" stroke="#e2e2e2" stroke-width="2"/>';
    bars.forEach((h, i) => {
        s += `<path d="M${xOf(i)} 1649 v${-h}" stroke="${h > 0 ? '#b5403c' : GREEN}" stroke-width="2.800"/>`;
    });
    s += line(dif, '#222') + line(dea, '#e6982c');
    for (let i = 19; i < 132; i++) {
        const main = i === 41 || i === 86 || i === 131;
        s += `<path d="M${xOf(i)} 1674 v${main ? 13 : 8}" stroke="${main ? '#777' : '#999'}" stroke-width="${main ? 3 : 2}" opacity="${Math.min(1, (i - 18) / 9)}"/>`;
    }
    s += '<text class="axis" x="15" y="1458" textLength="68">5.63</text><text class="axis" x="15" y="1668" textLength="82">-0.55</text>';
    s += '<text class="date-label" x="16" y="1722" textLength="147">20250811</text><text class="date-label" x="272" y="1722" textLength="145">20251015</text><text class="date-label" x="634" y="1722" textLength="141">20251217</text><text class="date-label" x="907" y="1722" textLength="157">20260302</text>';
    document.getElementById('macd').innerHTML = s;
}

drawKline();
drawMacd();
```
